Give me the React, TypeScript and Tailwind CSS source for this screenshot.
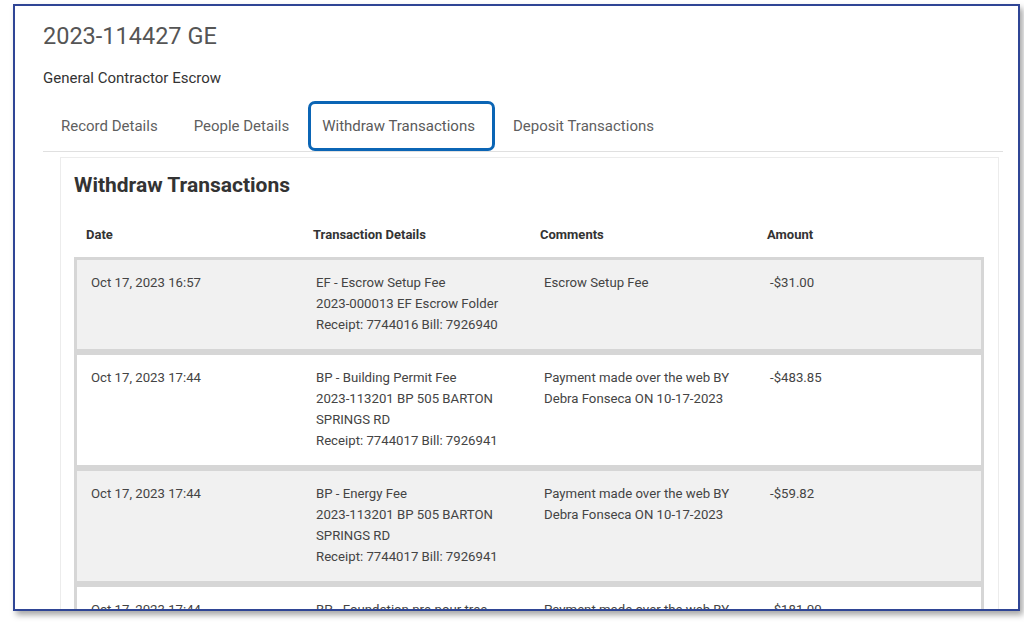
import React from "react";

type Row = {
  date: string;
  details: string[];
  comments: string[];
  amount: string;
};

const ROWS: Row[] = [
  {
    date: "Oct 17, 2023 16:57",
    details: ["EF - Escrow Setup Fee", "2023-000013 EF Escrow Folder", "Receipt: 7744016 Bill: 7926940"],
    comments: ["Escrow Setup Fee"],
    amount: "-$31.00",
  },
  {
    date: "Oct 17, 2023 17:44",
    details: ["BP - Building Permit Fee", "2023-113201 BP 505 BARTON", "SPRINGS RD", "Receipt: 7744017 Bill: 7926941"],
    comments: ["Payment made over the web BY", "Debra Fonseca ON 10-17-2023"],
    amount: "-$483.85",
  },
  {
    date: "Oct 17, 2023 17:44",
    details: ["BP - Energy Fee", "2023-113201 BP 505 BARTON", "SPRINGS RD", "Receipt: 7744017 Bill: 7926941"],
    comments: ["Payment made over the web BY", "Debra Fonseca ON 10-17-2023"],
    amount: "-$59.82",
  },
  {
    date: "Oct 17, 2023 17:44",
    details: ["BP - Foundation pre-pour tree", "2023-113201 BP 505 BARTON", "SPRINGS RD", "Receipt: 7744017 Bill: 7926941"],
    comments: ["Payment made over the web BY", "Debra Fonseca ON 10-17-2023"],
    amount: "-$181.00",
  },
];

const TABS = ["Record Details", "People Details", "Withdraw Transactions", "Deposit Transactions"];

export default function App() {
  return (
    <div className="w-[1024px] h-[623px] bg-white overflow-hidden font-['Roboto',sans-serif]">
      <div className="ml-[13px] mt-[4px] w-[1007px] h-[607px] border-2 border-[#2f4595] bg-white overflow-hidden shadow-[3px_4px_6px_rgba(0,0,0,0.35)]">
        <div className="pl-[28px] pt-[16px]">
          <h1 className="text-[23.5px] leading-[28px] text-[#555]">2023-114427 GE</h1>
          <div className="mt-[18px] text-[15px] leading-[20px] text-[#333]">General Contractor Escrow</div>

          <div className="mt-[13px] flex w-[960px] h-[51px] border-b border-[#e0e0e0]">
            {TABS.map((t) =>
              t === "Withdraw Transactions" ? (
                <div
                  key={t}
                  className="ml-[1px] h-[50px] flex items-center pl-[11px] pr-[17px] border-[3px] border-[#0b65b5] rounded-[7px] text-[15px] text-[#5a5a5a]"
                >
                  {t}
                </div>
              ) : (
                <div key={t} className="h-[50px] flex items-center px-[18px] text-[15px] text-[#5f5f5f]">
                  {t}
                </div>
              )
            )}
          </div>

          <div className="mt-[5px] ml-[17px] w-[939px] border border-[#ececec] pt-[14px] pl-[13px]">
            <h2 className="text-[21px] leading-[26px] font-bold text-[#333]">Withdraw Transactions</h2>

            <div className="mt-[29px] pl-[12px] grid grid-cols-[227px_227px_227px_1fr] text-[13px] leading-[16px] font-bold text-[#333]">
              <div>Date</div>
              <div>Transaction Details</div>
              <div>Comments</div>
              <div>Amount</div>
            </div>

            <div className="mt-[14px] w-[910px]">
              {ROWS.map((r, i) => (
                <div
                  key={i}
                  className={
                    "border-[3px] border-[#d6d6d6] pl-[14px] pt-[12px] pb-[14px] grid grid-cols-[225px_228px_226px_1fr] text-[13.2px] leading-[21px] text-[#444] " +
                    (i % 2 === 0 ? "bg-[#f1f1f1]" : "bg-white")
                  }
                >
                  <div>{r.date}</div>
                  <div>
                    {r.details.map((d, j) => (
                      <div key={j}>{d}</div>
                    ))}
                  </div>
                  <div>
                    {r.comments.map((c, j) => (
                      <div key={j}>{c}</div>
                    ))}
                  </div>
                  <div>{r.amount}</div>
                </div>
              ))}
            </div>
          </div>
        </div>
      </div>
    </div>
  );
}
